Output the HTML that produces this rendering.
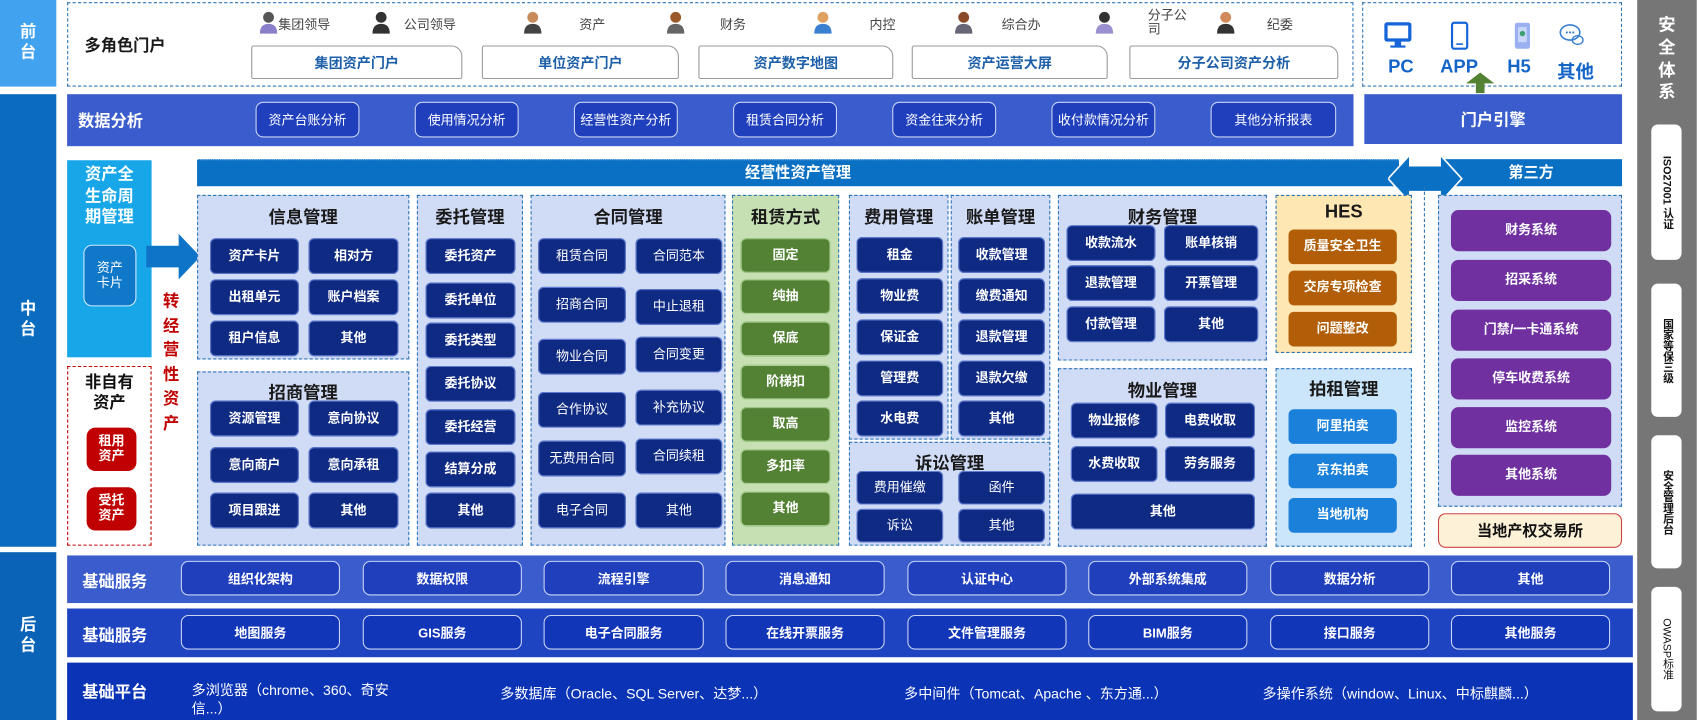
<!DOCTYPE html>
<html><head><meta charset="utf-8">
<style>
*{margin:0;padding:0;box-sizing:border-box}
html,body{width:1700px;height:720px;overflow:hidden;background:#fff;font-family:"Liberation Sans","Noto Sans CJK SC",sans-serif}
#w{position:absolute;left:0;top:0;width:1570px;height:665px;transform:scale(1.08280,1.08271);transform-origin:0 0}
.a{position:absolute}
.b{position:absolute;display:flex;align-items:center;justify-content:center;color:#fff;font-weight:bold;font-size:12px;border-radius:5px;text-align:center;line-height:1.15}
.nv{background:#0f2a82;box-shadow:0 0 0 1px #5f7bd0 inset}
.gr{background:#548235;box-shadow:0 0 0 1px #a9cf8f inset}
.br{background:#b25e08}
.lb{background:#1a80da}
.pu{background:#7030a0;border-radius:7px}
.mod{position:absolute;border:1.5px dashed #2e75b6;background:#d0dbf6}
.t{position:absolute;font-weight:bold;font-size:16px;color:#1a1a1a;text-align:center;width:100%}
.band{position:absolute;background:#3a5ccc}
.bb{position:absolute;display:flex;align-items:center;justify-content:center;color:#fff;font-weight:bold;font-size:12px;border:1.5px solid #c9d4f5;border-radius:7px;background:#1f3fbd}
.side{position:absolute;display:flex;align-items:center;justify-content:center;color:#fff;font-weight:bold;font-size:15px;text-align:center;line-height:1.25}
.role{position:absolute;font-size:12px;color:#444}
.pb{position:absolute;display:flex;align-items:center;justify-content:center;background:#fff;border:1px solid #999;border-radius:2px 10px 2px 2px;color:#1d5fa8;font-weight:bold;font-size:13px}
.sec{position:absolute;left:1525px;width:28px;background:#fff;border-radius:6px;display:flex;align-items:center;justify-content:center}
.sec span{writing-mode:vertical-rl;font-size:10px;font-weight:bold;color:#111}
</style></head><body><div id="w">

<div class="side" style="left:0;top:0;width:52px;height:80px;background:#41a2ef">前<br>台</div>
<div class="side" style="left:0;top:87px;width:52px;height:418px;background:#0b6cbf">中<br>台</div>
<div class="side" style="left:0;top:510px;width:52px;height:155px;background:#0b63b8">后<br>台</div>

<div class="a" style="left:1512px;top:0;width:55px;height:665px;background:#767676"></div>
<div class="side" style="left:1512px;top:8px;width:55px;height:95px;font-size:16px;line-height:1.3">安<br>全<br>体<br>系</div>
<div class="sec" style="top:115px;height:125px"><span>ISO27001 认证</span></div>
<div class="sec" style="top:262px;height:123px"><span>国家等保三级</span></div>
<div class="sec" style="top:402px;height:123px"><span>安全管理后台</span></div>
<div class="sec" style="top:542px;height:115px"><span style="font-weight:normal">OWASP标准</span></div>

<div class="a" style="left:62px;top:2px;width:1188px;height:78px;border:1.5px dashed #2e75b6"></div>
<div class="a" style="left:78px;top:31px;font-size:15px;font-weight:bold;color:#1a1a1a">多角色门户</div>
<svg class="a" style="left:0;top:0" width="1250" height="40">
<g fill="#555"><circle cx="248" cy="16" r="5"/><path d="M240 31q0-9 8-9t8 9z" fill="#8a7fc9"/></g>
<g><circle cx="352" cy="16" r="5" fill="#333"/><path d="M344 31q0-9 8-9t8 9z" fill="#333"/></g>
<g><circle cx="492" cy="16" r="5" fill="#c98a5a"/><path d="M484 31q0-9 8-9t8 9z" fill="#444"/></g>
<g><circle cx="624" cy="16" r="5" fill="#9a5a2a"/><path d="M616 31q0-9 8-9t8 9z" fill="#666"/></g>
<g><circle cx="760" cy="16" r="5" fill="#e0a060"/><path d="M752 31q0-9 8-9t8 9z" fill="#3a7fd0"/></g>
<g><circle cx="890" cy="16" r="5" fill="#8a4a2a"/><path d="M882 31q0-9 8-9t8 9z" fill="#667"/></g>
<g><circle cx="1020" cy="16" r="5" fill="#333"/><path d="M1012 31q0-9 8-9t8 9z" fill="#9a90d0"/></g>
<g><circle cx="1132" cy="16" r="5" fill="#d08a5a"/><path d="M1124 31q0-9 8-9t8 9z" fill="#333"/></g>
</svg>
<div class="role" style="left:257px;top:14px">集团领导</div>
<div class="role" style="left:373px;top:14px">公司领导</div>
<div class="role" style="left:535px;top:14px">资产</div>
<div class="role" style="left:665px;top:14px">财务</div>
<div class="role" style="left:803px;top:14px">内控</div>
<div class="role" style="left:925px;top:14px">综合办</div>
<div class="role" style="left:1060px;top:8px;line-height:1.1">分子公<br>司</div>
<div class="role" style="left:1170px;top:14px">纪委</div>
<div class="pb" style="left:232px;top:42px;width:195px;height:31px">集团资产门户</div>
<div class="pb" style="left:445px;top:42px;width:182px;height:31px">单位资产门户</div>
<div class="pb" style="left:645px;top:42px;width:180px;height:31px">资产数字地图</div>
<div class="pb" style="left:842px;top:42px;width:181px;height:31px">资产运营大屏</div>
<div class="pb" style="left:1043px;top:42px;width:193px;height:31px">分子公司资产分析</div>

<div class="a" style="left:1258px;top:2px;width:240px;height:78px;border:1.5px dashed #2e75b6"></div>
<svg class="a" style="left:1258px;top:0" width="240" height="90">
<rect x="22" y="22" width="22" height="15" rx="1" fill="none" stroke="#1565d8" stroke-width="3"/><rect x="30" y="38" width="6" height="4" fill="#1565d8"/><rect x="26" y="42" width="14" height="2" fill="#1565d8"/>
<rect x="83" y="21" width="14" height="24" rx="2" fill="none" stroke="#1565d8" stroke-width="2"/><rect x="87" y="40" width="6" height="1.5" fill="#1565d8"/>
<rect x="141" y="21" width="14" height="24" rx="2" fill="#9ab0f0"/><rect x="144" y="25" width="8" height="14" fill="#c8d6fa"/><circle cx="148" cy="31" r="2.5" fill="#3aa070"/>
<ellipse cx="192" cy="30" rx="9" ry="7" fill="none" stroke="#3a7fd0" stroke-width="1.5"/><circle cx="189" cy="30" r="1" fill="#3a7fd0"/><circle cx="192" cy="30" r="1" fill="#3a7fd0"/><circle cx="195" cy="30" r="1" fill="#3a7fd0"/><ellipse cx="199" cy="37" rx="5" ry="4" fill="none" stroke="#3a7fd0" stroke-width="1.3"/>
<path d="M105 86v-9h-9l13-10 13 10h-9v9z" fill="#548235"/>
</svg>
<div class="a" style="left:1282px;top:52px;font-size:17px;font-weight:bold;color:#1565c8">PC</div>
<div class="a" style="left:1330px;top:52px;font-size:17px;font-weight:bold;color:#1565c8">APP</div>
<div class="a" style="left:1392px;top:52px;font-size:17px;font-weight:bold;color:#1565c8">H5</div>
<div class="a" style="left:1438px;top:52px;font-size:17px;font-weight:bold;color:#1565c8">其他</div>

<div class="band" style="left:62px;top:87px;width:1188px;height:48px"></div>
<div class="a" style="left:72px;top:101px;color:#fff;font-weight:bold;font-size:15px">数据分析</div>
<div class="bb" style="left:236px;top:94px;width:96px;height:33px;font-weight:normal">资产台账分析</div>
<div class="bb" style="left:383px;top:94px;width:96px;height:33px;font-weight:normal">使用情况分析</div>
<div class="bb" style="left:530px;top:94px;width:96px;height:33px;font-weight:normal">经营性资产分析</div>
<div class="bb" style="left:677px;top:94px;width:96px;height:33px;font-weight:normal">租赁合同分析</div>
<div class="bb" style="left:824px;top:94px;width:96px;height:33px;font-weight:normal">资金往来分析</div>
<div class="bb" style="left:971px;top:94px;width:96px;height:33px;font-weight:normal">收付款情况分析</div>
<div class="bb" style="left:1118px;top:94px;width:116px;height:33px;font-weight:normal">其他分析报表</div>
<div class="band" style="left:1260px;top:87px;width:238px;height:46px;display:flex;align-items:center;justify-content:center;color:#fff;font-weight:bold;font-size:15px">门户引擎</div>

<div class="a" style="left:62px;top:148px;width:78px;height:182px;background:#17a7e8"></div>
<div class="a" style="left:62px;top:152px;width:78px;color:#fff;font-weight:bold;font-size:15px;text-align:center;line-height:1.3">资产全<br>生命周<br>期管理</div>
<div class="b" style="left:77px;top:226px;width:49px;height:57px;border:1.5px solid #cfe9ff;border-radius:8px;background:#0f78c8;font-weight:normal;font-size:12px">资产<br>卡片</div>
<svg class="a" style="left:135px;top:214px" width="52" height="46"><path d="M0 13h30v-11l20 21-20 21v-11h-30z" fill="#0e74c8"/></svg>
<div class="a" style="left:150px;top:268px;width:16px;color:#c00000;font-weight:bold;font-size:15px;line-height:1.5;text-align:center">转经营性资产</div>
<div class="a" style="left:62px;top:338px;width:78px;height:166px;border:1.5px dashed #c00000"></div>
<div class="a" style="left:62px;top:345px;width:78px;text-align:center;font-weight:bold;font-size:15px;line-height:1.25;color:#111">非自有<br>资产</div>
<div class="b" style="left:80px;top:395px;width:46px;height:40px;background:#c00000;border-radius:8px;font-size:12px">租用<br>资产</div>
<div class="b" style="left:80px;top:450px;width:46px;height:40px;background:#c00000;border-radius:8px;font-size:12px">受托<br>资产</div>

<div class="a" style="left:182px;top:147px;width:1110px;height:25px;background:#0a70c4;border-top:1.5px dotted #9cc4ef;color:#fff;font-weight:bold;font-size:14px;text-align:center;line-height:23px">经营性资产管理</div>
<div class="a" style="left:1330px;top:147px;width:168px;height:25px;background:#0a70c4;color:#fff;font-weight:bold;font-size:14px;text-align:center;line-height:25px">第三方</div>
<svg class="a" style="left:1282px;top:135px" width="70" height="60"><path d="M0 30l20-22v10h28v-10l20 22-20 22v-10h-28v10z" fill="#0a70c4" stroke="#fff" stroke-width="1.5"/></svg>
<div class="a" style="left:1315px;top:172px;height:333px;border-left:1.5px dashed #2e75b6"></div>

<div class="mod" style="left:182px;top:180px;width:196px;height:152px"><div class="t" style="top:6px">信息管理</div></div>
<div class="b nv" style="left:194px;top:220px;width:82px;height:33px">资产卡片</div>
<div class="b nv" style="left:285px;top:220px;width:83px;height:33px">相对方</div>
<div class="b nv" style="left:194px;top:258px;width:82px;height:33px">出租单元</div>
<div class="b nv" style="left:285px;top:258px;width:83px;height:33px">账户档案</div>
<div class="b nv" style="left:194px;top:296px;width:82px;height:33px">租户信息</div>
<div class="b nv" style="left:285px;top:296px;width:83px;height:33px">其他</div>
<div class="mod" style="left:182px;top:343px;width:196px;height:161px"><div class="t" style="top:5px">招商管理</div></div>
<div class="b nv" style="left:194px;top:370px;width:82px;height:33px">资源管理</div>
<div class="b nv" style="left:285px;top:370px;width:83px;height:33px">意向协议</div>
<div class="b nv" style="left:194px;top:413px;width:82px;height:33px">意向商户</div>
<div class="b nv" style="left:285px;top:413px;width:83px;height:33px">意向承租</div>
<div class="b nv" style="left:194px;top:455px;width:82px;height:33px">项目跟进</div>
<div class="b nv" style="left:285px;top:455px;width:83px;height:33px">其他</div>
<div class="mod" style="left:385px;top:180px;width:98px;height:324px"><div class="t" style="top:6px">委托管理</div></div>
<div class="b nv" style="left:393px;top:220px;width:83px;height:33px">委托资产</div>
<div class="b nv" style="left:393px;top:261px;width:83px;height:33px">委托单位</div>
<div class="b nv" style="left:393px;top:298px;width:83px;height:33px">委托类型</div>
<div class="b nv" style="left:393px;top:338px;width:83px;height:33px">委托协议</div>
<div class="b nv" style="left:393px;top:378px;width:83px;height:33px">委托经营</div>
<div class="b nv" style="left:393px;top:417px;width:83px;height:33px">结算分成</div>
<div class="b nv" style="left:393px;top:455px;width:83px;height:33px">其他</div>
<div class="mod" style="left:490px;top:180px;width:180px;height:324px"><div class="t" style="top:6px">合同管理</div></div>
<div class="b nv" style="left:497px;top:220px;width:81px;height:33px;font-weight:normal">租赁合同</div>
<div class="b nv" style="left:587px;top:220px;width:80px;height:33px;font-weight:normal">合同范本</div>
<div class="b nv" style="left:497px;top:265px;width:81px;height:33px;font-weight:normal">招商合同</div>
<div class="b nv" style="left:587px;top:267px;width:80px;height:33px;font-weight:normal">中止退租</div>
<div class="b nv" style="left:497px;top:313px;width:81px;height:33px;font-weight:normal">物业合同</div>
<div class="b nv" style="left:587px;top:311px;width:80px;height:33px;font-weight:normal">合同变更</div>
<div class="b nv" style="left:497px;top:362px;width:81px;height:33px;font-weight:normal">合作协议</div>
<div class="b nv" style="left:587px;top:360px;width:80px;height:33px;font-weight:normal">补充协议</div>
<div class="b nv" style="left:497px;top:407px;width:81px;height:33px;font-weight:normal">无费用合同</div>
<div class="b nv" style="left:587px;top:405px;width:80px;height:33px;font-weight:normal">合同续租</div>
<div class="b nv" style="left:497px;top:455px;width:81px;height:33px;font-weight:normal">电子合同</div>
<div class="b nv" style="left:587px;top:455px;width:80px;height:33px;font-weight:normal">其他</div>
<div class="mod" style="left:676px;top:180px;width:99px;height:324px;background:#c6e0b4"><div class="t" style="top:6px">租赁方式</div></div>
<div class="b gr" style="left:684px;top:220px;width:83px;height:32px">固定</div>
<div class="b gr" style="left:684px;top:258px;width:83px;height:32px">纯抽</div>
<div class="b gr" style="left:684px;top:297px;width:83px;height:32px">保底</div>
<div class="b gr" style="left:684px;top:337px;width:83px;height:32px">阶梯扣</div>
<div class="b gr" style="left:684px;top:376px;width:83px;height:32px">取高</div>
<div class="b gr" style="left:684px;top:415px;width:83px;height:32px">多扣率</div>
<div class="b gr" style="left:684px;top:454px;width:83px;height:32px">其他</div>
<div class="mod" style="left:784px;top:180px;width:92px;height:226px"><div class="t" style="top:6px">费用管理</div></div>
<div class="mod" style="left:878px;top:180px;width:92px;height:226px"><div class="t" style="top:6px">账单管理</div></div>
<div class="b nv" style="left:791px;top:219px;width:80px;height:33px">租金</div>
<div class="b nv" style="left:791px;top:257px;width:80px;height:33px">物业费</div>
<div class="b nv" style="left:791px;top:295px;width:80px;height:33px">保证金</div>
<div class="b nv" style="left:791px;top:333px;width:80px;height:33px">管理费</div>
<div class="b nv" style="left:791px;top:370px;width:80px;height:33px">水电费</div>
<div class="b nv" style="left:885px;top:219px;width:80px;height:33px">收款管理</div>
<div class="b nv" style="left:885px;top:257px;width:80px;height:33px">缴费通知</div>
<div class="b nv" style="left:885px;top:295px;width:80px;height:33px">退款管理</div>
<div class="b nv" style="left:885px;top:333px;width:80px;height:33px">退款欠缴</div>
<div class="b nv" style="left:885px;top:370px;width:80px;height:33px">其他</div>
<div class="mod" style="left:784px;top:408px;width:186px;height:96px"><div class="t" style="top:5px">诉讼管理</div></div>
<div class="b nv" style="left:791px;top:435px;width:80px;height:31px;font-weight:normal">费用催缴</div>
<div class="b nv" style="left:885px;top:435px;width:80px;height:31px;font-weight:normal">函件</div>
<div class="b nv" style="left:791px;top:470px;width:80px;height:31px;font-weight:normal">诉讼</div>
<div class="b nv" style="left:885px;top:470px;width:80px;height:31px;font-weight:normal">其他</div>
<div class="mod" style="left:977px;top:180px;width:193px;height:153px"><div class="t" style="top:6px">财务管理</div></div>
<div class="b nv" style="left:985px;top:208px;width:82px;height:33px">收款流水</div>
<div class="b nv" style="left:1075px;top:208px;width:87px;height:33px">账单核销</div>
<div class="b nv" style="left:985px;top:245px;width:82px;height:33px">退款管理</div>
<div class="b nv" style="left:1075px;top:245px;width:87px;height:33px">开票管理</div>
<div class="b nv" style="left:985px;top:283px;width:82px;height:33px">付款管理</div>
<div class="b nv" style="left:1075px;top:283px;width:87px;height:33px">其他</div>
<div class="mod" style="left:977px;top:340px;width:193px;height:165px"><div class="t" style="top:6px">物业管理</div></div>
<div class="b nv" style="left:989px;top:372px;width:80px;height:33px">物业报修</div>
<div class="b nv" style="left:1076px;top:372px;width:83px;height:33px">电费收取</div>
<div class="b nv" style="left:989px;top:412px;width:80px;height:33px">水费收取</div>
<div class="b nv" style="left:1076px;top:412px;width:83px;height:33px">劳务服务</div>
<div class="b nv" style="left:989px;top:456px;width:170px;height:33px">其他</div>
<div class="mod" style="left:1178px;top:180px;width:126px;height:146px;background:#ffe7b3"><div class="t" style="top:5px;font-size:17px">HES</div></div>
<div class="b br" style="left:1190px;top:212px;width:100px;height:32px">质量安全卫生</div>
<div class="b br" style="left:1190px;top:250px;width:100px;height:32px">交房专项检查</div>
<div class="b br" style="left:1190px;top:288px;width:100px;height:32px">问题整改</div>
<div class="mod" style="left:1178px;top:340px;width:126px;height:165px;background:#cbe5fb"><div class="t" style="top:5px">拍租管理</div></div>
<div class="b lb" style="left:1190px;top:378px;width:100px;height:32px">阿里拍卖</div>
<div class="b lb" style="left:1190px;top:419px;width:100px;height:32px">京东拍卖</div>
<div class="b lb" style="left:1190px;top:460px;width:100px;height:32px">当地机构</div>
<div class="mod" style="left:1328px;top:180px;width:170px;height:288px"></div>
<div class="b pu" style="left:1340px;top:194px;width:148px;height:38px">财务系统</div>
<div class="b pu" style="left:1340px;top:240px;width:148px;height:38px">招采系统</div>
<div class="b pu" style="left:1340px;top:286px;width:148px;height:38px">门禁/一卡通系统</div>
<div class="b pu" style="left:1340px;top:331px;width:148px;height:38px">停车收费系统</div>
<div class="b pu" style="left:1340px;top:376px;width:148px;height:38px">监控系统</div>
<div class="b pu" style="left:1340px;top:420px;width:148px;height:38px">其他系统</div>
<div class="b" style="left:1328px;top:474px;width:170px;height:32px;background:#fdf1d8;border:1.5px solid #d04040;border-radius:7px;color:#111;font-size:14px">当地产权交易所</div>

<div class="band" style="left:62px;top:513px;width:1446px;height:44px"></div>
<div class="a" style="left:76px;top:526px;color:#fff;font-weight:bold;font-size:15px">基础服务</div>
<div class="bb" style="left:167px;top:518px;width:147px;height:32px">组织化架构</div>
<div class="bb" style="left:335px;top:518px;width:147px;height:32px">数据权限</div>
<div class="bb" style="left:502px;top:518px;width:148px;height:32px">流程引擎</div>
<div class="bb" style="left:670px;top:518px;width:147px;height:32px">消息通知</div>
<div class="bb" style="left:838px;top:518px;width:147px;height:32px">认证中心</div>
<div class="bb" style="left:1005px;top:518px;width:147px;height:32px">外部系统集成</div>
<div class="bb" style="left:1173px;top:518px;width:147px;height:32px">数据分析</div>
<div class="bb" style="left:1340px;top:518px;width:147px;height:32px">其他</div>

<div class="band" style="left:62px;top:562px;width:1446px;height:45px;background:#1e44c2"></div>
<div class="a" style="left:76px;top:576px;color:#fff;font-weight:bold;font-size:15px">基础服务</div>
<div class="bb" style="left:167px;top:568px;width:147px;height:32px;background:#1236b8">地图服务</div>
<div class="bb" style="left:335px;top:568px;width:147px;height:32px;background:#1236b8">GIS服务</div>
<div class="bb" style="left:502px;top:568px;width:148px;height:32px;background:#1236b8">电子合同服务</div>
<div class="bb" style="left:670px;top:568px;width:147px;height:32px;background:#1236b8">在线开票服务</div>
<div class="bb" style="left:838px;top:568px;width:147px;height:32px;background:#1236b8">文件管理服务</div>
<div class="bb" style="left:1005px;top:568px;width:147px;height:32px;background:#1236b8">BIM服务</div>
<div class="bb" style="left:1173px;top:568px;width:147px;height:32px;background:#1236b8">接口服务</div>
<div class="bb" style="left:1340px;top:568px;width:147px;height:32px;background:#1236b8">其他服务</div>

<div class="band" style="left:62px;top:612px;width:1446px;height:53px;background:#0a33b5"></div>
<div class="a" style="left:76px;top:628px;color:#fff;font-weight:bold;font-size:15px">基础平台</div>
<div class="a" style="left:177px;top:630px;width:205px;color:#fff;font-size:13px;line-height:1.3">多浏览器（chrome、360、奇安信...）</div>
<div class="a" style="left:462px;top:630px;color:#fff;font-size:13px">多数据库（Oracle、SQL Server、达梦...）</div>
<div class="a" style="left:835px;top:630px;color:#fff;font-size:13px">多中间件（Tomcat、Apache 、东方通...）</div>
<div class="a" style="left:1166px;top:630px;color:#fff;font-size:13px">多操作系统（window、Linux、中标麒麟...）</div>

</div></body></html>
